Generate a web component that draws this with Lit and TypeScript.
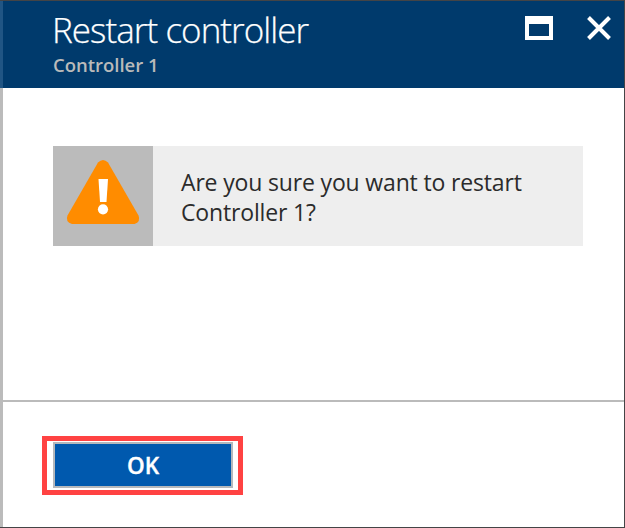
import { LitElement, html, css } from "lit";
import { customElement } from "lit/decorators.js";

@customElement("app-root")
export class AppRoot extends LitElement {
  static styles = css`
    :host {
      display: flex;
      flex-direction: column;
      box-sizing: border-box;
      width: 625px;
      height: 528px;
      border: solid #444446;
      border-width: 1px 1px 1px 0;
      background: #fff;
      font-family: "Open Sans", "Noto Sans", sans-serif;
      overflow: hidden;
    }
    * {
      box-sizing: border-box;
    }
    header {
      display: flex;
      justify-content: space-between;
      height: 87px;
      flex: none;
      padding: 8px 12px 0 50px;
      border-left: 3px solid #205584;
      background: #003a6c;
    }
    h1,
    h2,
    p {
      margin: 0;
      white-space: nowrap;
    }
    h1 {
      margin-left: -1px;
      font-size: 35px;
      font-weight: 300;
      line-height: 42px;
      color: #fff;
      letter-spacing: -0.95px;
      -webkit-text-stroke: 0.25px #fff;
    }
    h2 {
      padding-top: 1px;
      font-size: 18.5px;
      font-weight: 600;
      line-height: 26px;
      color: #bababa;
      letter-spacing: -0.02px;
    }
    .tools {
      display: flex;
      gap: 34px;
      padding-top: 7px;
    }
    svg {
      display: block;
      flex: none;
    }
    main {
      flex: 1;
      display: flex;
      flex-direction: column;
      border-left: 3px solid #bbb;
    }
    .content {
      height: 312px;
      padding: 58px 41px 0 50px;
    }
    .notice {
      display: flex;
      height: 100px;
      background: #eee;
    }
    .mark {
      width: 100px;
      background: #bbb;
    }
    p {
      padding: 21px 0 0 28px;
      font-size: 23px;
      line-height: 30px;
      color: #2b2b2b;
      letter-spacing: -0.16px;
    }
    footer {
      flex: 1;
      border-top: 2px solid #bbb;
      padding: 34px 0 0 39px;
    }
    .focus {
      width: 201px;
      height: 59px;
      border: 5px solid #ff4242;
      padding: 1px 5px 2px 6px;
    }
    button {
      display: block;
      width: 180px;
      height: 46px;
      border: 2px solid #b5b8bc;
      background: #0059ae;
      padding: 1px 0 0;
      font: 600 22.5px/41px "Open Sans", sans-serif;
      color: #fff;
      -webkit-text-stroke: 0.4px #fff;
    }
  `;

  render() {
    return html`
      <header>
        <div>
          <h1>Restart controller</h1>
          <h2>Controller 1</h2>
        </div>
        <div class="tools">
          <svg width="28" height="24" viewBox="0 0 28 24">
            <path fill="#fff" fill-rule="evenodd" d="M0 0H28V24H0ZM4 8V20H24V8Z" />
          </svg>
          <svg width="25" height="24" viewBox="0 0 25 24">
            <path fill="none" stroke="#fff" stroke-width="4" d="M1.500 1.500L22.500 22.500M22.500 1.500L1.500 22.500" />
          </svg>
        </div>
      </header>
      <main>
        <div class="content">
          <div class="notice">
            <svg class="mark" width="100" height="100" viewBox="0 0 100 100">
              <path
                fill="#ff8c00"
                d="M45 16.500Q50 11.500 55 16.500L85.500 69.500Q88 76 81.500 78H19Q12 76 14.500 69.500Z"
              />
              <path fill="#fff" d="M45.500 33H55L53.500 56H47Z" />
              <circle cx="50" cy="63.300" r="5.100" fill="#fff" />
            </svg>
            <p>Are you sure you want to restart<br />Controller 1?</p>
          </div>
        </div>
        <footer>
          <div class="focus"><button>OK</button></div>
        </footer>
      </main>
    `;
  }
}
